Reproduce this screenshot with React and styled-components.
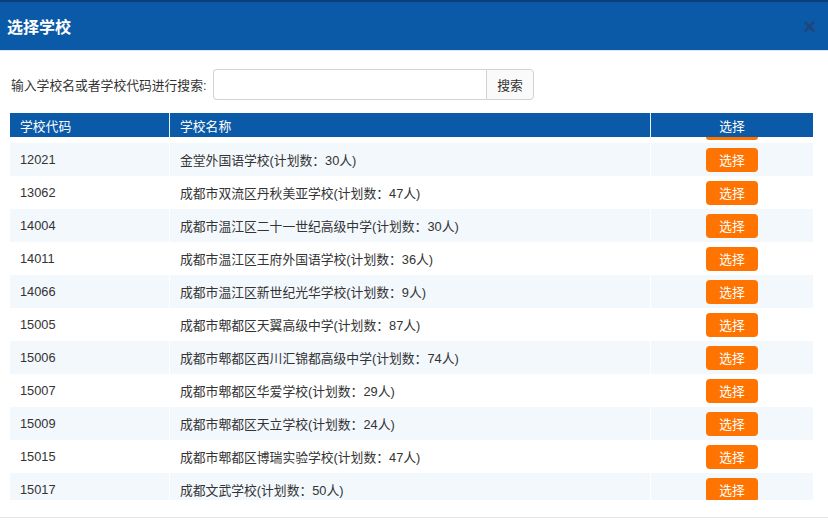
import React from 'react'
import styled, { createGlobalStyle } from 'styled-components'

const GlobalStyle = createGlobalStyle`
  html, body {
    margin: 0;
    padding: 0;
    background: #fff;
  }
  body {
    font-family: "Liberation Sans", "Noto Sans CJK SC", sans-serif;
    color: #333;
  }
  * { box-sizing: border-box; }
`

const schools = [
  ['12021', '金堂外国语学校(计划数：30人)'],
  ['13062', '成都市双流区丹秋美亚学校(计划数：47人)'],
  ['14004', '成都市温江区二十一世纪高级中学(计划数：30人)'],
  ['14011', '成都市温江区王府外国语学校(计划数：36人)'],
  ['14066', '成都市温江区新世纪光华学校(计划数：9人)'],
  ['15005', '成都市郫都区天翼高级中学(计划数：87人)'],
  ['15006', '成都市郫都区西川汇锦都高级中学(计划数：74人)'],
  ['15007', '成都市郫都区华爱学校(计划数：29人)'],
  ['15009', '成都市郫都区天立学校(计划数：24人)'],
  ['15015', '成都市郫都区博瑞实验学校(计划数：47人)'],
  ['15017', '成都文武学校(计划数：50人)'],
]

const App = () => {
  return (
    <Modal>
      <GlobalStyle />
      <Header>
        <Title>选择学校</Title>
        <Close>×</Close>
      </Header>
      <Content>
        <SearchRow>
          <Label>输入学校名或者学校代码进行搜索:</Label>
          <SearchInput type='text' />
          <SearchButton>搜索</SearchButton>
        </SearchRow>
        <TableHead>
          <HeadCell>学校代码</HeadCell>
          <HeadCell>学校名称</HeadCell>
          <HeadCell $center>选择</HeadCell>
        </TableHead>
        <TableBody>
          {/* bottom edge of the row scrolled out above */}
          <PeekRow>
            <span />
            <span />
            <PeekCell>
              <PeekButton />
            </PeekCell>
          </PeekRow>
          {schools.map(([code, name], i) => (
            <Row key={code} $striped={i % 2 === 0}>
              <Cell>{code}</Cell>
              <Cell>{name}</Cell>
              <Cell $center>
                <PickButton>选择</PickButton>
              </Cell>
            </Row>
          ))}
        </TableBody>
      </Content>
      <Footer />
    </Modal>
  )
}

const Modal = styled.div`
  width: 828px;
  min-height: 532px;
  background: #fff;
  display: flex;
  flex-direction: column;
`

const Header = styled.div`
  height: 51px;
  background: #0b5aa7;
  border-top: 2px solid #0a3f7c;
  border-bottom: 1px solid #d4e9f9;
  display: flex;
  align-items: center;
  justify-content: space-between;
  padding: 0 12px 0 7px;
`

const Title = styled.h1`
  margin: 0;
  font-family: "Noto Sans CJK SC", sans-serif;
  font-size: 16px;
  font-weight: 700;
  color: #fff;
`

const Close = styled.span`
  font-family: "Liberation Sans", sans-serif;
  font-size: 22px;
  font-weight: 700;
  line-height: 1;
  color: #1f4677;
  margin-top: 1px;
`

const Content = styled.div`
  padding: 18px 15px 0 10px;
  display: flex;
  flex-direction: column;
`

const SearchRow = styled.div`
  display: flex;
  align-items: center;
  height: 31px;
`

const Label = styled.label`
  font-size: 12.8px;
  color: #333;
  width: 203px;
  padding-left: 1px;
`

const SearchInput = styled.input`
  width: 273px;
  height: 31px;
  border: 1px solid #d2d2d2;
  border-right: none;
  border-radius: 4px 0 0 4px;
  outline: none;
  padding: 0 8px;
`

const SearchButton = styled.button`
  width: 48px;
  height: 31px;
  border: 1px solid #d2d2d2;
  border-radius: 0 4px 4px 0;
  background: #fafafa;
  font-family: "Liberation Sans", "Noto Sans CJK SC", sans-serif;
  font-size: 12.8px;
  color: #333;
  padding: 0;
`

const columns = '160px 481px 162px'

const TableHead = styled.div`
  margin-top: 13px;
  display: grid;
  grid-template-columns: ${columns};
  height: 24px;
  background: #0b5aa7;
`

const HeadCell = styled.div`
  display: flex;
  align-items: center;
  justify-content: ${p => (p.$center ? 'center' : 'flex-start')};
  padding-left: ${p => (p.$center ? '0' : '10px')};
  font-size: 12.8px;
  color: #fff;
  border-right: 1px solid #e8f1fa;
  &:last-child { border-right: none; }
`

const TableBody = styled.div`
  height: 363px;
  overflow: hidden;
`

const PeekRow = styled.div`
  display: grid;
  grid-template-columns: ${columns};
  height: 6px;
`

const PeekCell = styled.div`
  display: flex;
  justify-content: center;
  align-items: flex-start;
`

const PeekButton = styled.div`
  width: 52px;
  height: 3px;
  background: #ff7300;
  border-radius: 0 0 4px 4px;
`

const Row = styled.div`
  display: grid;
  grid-template-columns: ${columns};
  height: 33px;
  background: ${p => (p.$striped ? '#f3f8fd' : '#fff')};
`

const Cell = styled.div`
  display: flex;
  align-items: center;
  justify-content: ${p => (p.$center ? 'center' : 'flex-start')};
  padding-left: ${p => (p.$center ? '0' : '10px')};
  font-size: 12.8px;
  color: #333;
  border-right: 1px solid #fff;
  &:last-child { border-right: none; }
`

const PickButton = styled.button`
  width: 52px;
  height: 24px;
  border: none;
  border-radius: 4px;
  background: #ff7300;
  color: #fff;
  font-family: "Liberation Sans", "Noto Sans CJK SC", sans-serif;
  font-size: 12.8px;
  padding: 0;
`

const Footer = styled.div`
  margin-top: 17px;
  border-top: 1px solid #e6e6e6;
  flex: 1;
`

export default App
